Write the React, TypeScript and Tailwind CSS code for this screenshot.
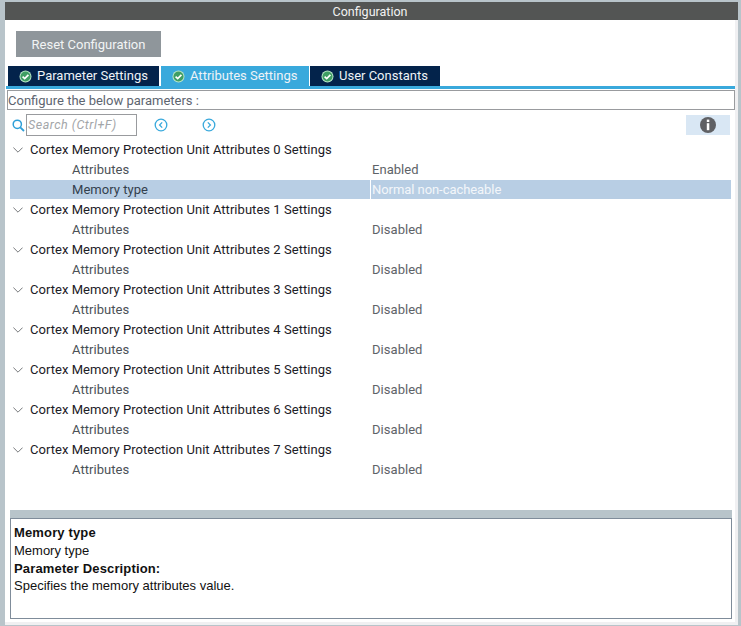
const din = "font-['Roboto',sans-serif]";

const settings = [
  { id: 0, rows: [["Attributes", "Enabled"], ["Memory type", "Normal non-cacheable"]] },
  ...[1, 2, 3, 4, 5, 6, 7].map((id) => ({ id, rows: [["Attributes", "Disabled"]] })),
];

const CheckBadge = () => (
  <svg width="13" height="13" viewBox="0 0 13 13" className="shrink-0">
    <circle cx="6.5" cy="6.5" r="6" fill="#b9e6c8" />
    <circle cx="6.5" cy="6.5" r="5" fill="#3f9e63" />
    <path d="M3.6 6.6 L5.7 8.6 L9.4 4.8" fill="none" stroke="#fff" strokeWidth="1.7" />
  </svg>
);

const Tab = ({ label, active, className }: { label: string; active?: boolean; className: string }) => (
  <div
    className={`flex h-5 shrink-0 items-center whitespace-nowrap text-[13px] text-[#eef3f7] ${
      active ? "bg-[#39a9dc]" : "bg-[#03234b]"
    } ${className}`}
  >
    <CheckBadge />
    <span className="ml-[5px]">{label}</span>
  </div>
);

const CircleArrow = ({ dir }: { dir: "left" | "right" }) => (
  <svg width="14" height="14" viewBox="0 0 14 14">
    <circle cx="7" cy="7" r="5.8" fill="none" stroke="#39a9dc" strokeWidth="1.3" />
    <path
      d={dir === "left" ? "M8.2 4.4 L5.6 7 L8.2 9.6" : "M5.8 4.4 L8.4 7 L5.8 9.6"}
      fill="none"
      stroke="#39a9dc"
      strokeWidth="1.3"
    />
  </svg>
);

export default function App() {
  return (
    <div className={`h-[626px] w-[741px] overflow-hidden bg-[#b8c4ca] pl-[5px] pr-[3px] pt-[2px] pb-px ${din}`}>
      <div className="flex h-full flex-col bg-[#f0f0f2]">
        <div className="flex h-[18px] shrink-0 items-center justify-center bg-[#535554] pr-[3px] pt-[2px] text-[12.5px] text-[#f2f2f2]">
          Configuration
        </div>
        <div className="mr-[3px] mb-[3px] flex min-h-0 flex-1 flex-col bg-white pl-px">
          <div className="ml-[10px] mt-[11px] flex h-[26px] w-[145px] items-center justify-center bg-[#8f969b] pt-px text-[13px] text-[#f2f4f5]">
            Reset Configuration
          </div>

          <div className="ml-[2px] mt-[9px] flex">
            <Tab label="Parameter Settings" className="w-[151px] pl-[11px]" />
            <Tab label="Attributes Settings" active className="ml-[2px] w-[148px] pl-[11px]" />
            <Tab label="User Constants" className="ml-px w-[130px] pl-[11px]" />
          </div>
          <div className="h-[3px] shrink-0 bg-[#39a9dc]" />

          <div className="ml-px mt-px flex h-5 items-center border border-[#999b9e] pt-[2px] text-[13px] text-[#5d6570]">
            Configure the below parameters :
          </div>

          <div className="mt-1 flex h-[22px] items-center">
            <svg width="13" height="13" viewBox="0 0 13 13" className="ml-[6px]">
              <circle cx="5.3" cy="5.3" r="4.1" fill="none" stroke="#2e9fd8" strokeWidth="1.5" />
              <path d="M8.3 8.3 L12 12" stroke="#2e9fd8" strokeWidth="1.8" />
            </svg>
            <div className="ml-px flex h-[22px] w-[111px] items-center border border-[#999b9e] pl-px text-[12.5px] italic tracking-[0.5px] text-[#a3a6a9]">
              Search (Ctrl+F)
            </div>
            <div className="ml-[17px] flex">
              <CircleArrow dir="left" />
            </div>
            <div className="ml-[34px] flex">
              <CircleArrow dir="right" />
            </div>
            <div className="ml-auto mr-[5px] flex h-5 w-11 items-center justify-center bg-[#d9e7f4]">
              <svg width="16" height="16" viewBox="0 0 16 16">
                <circle cx="8" cy="8" r="8" fill="#5f6064" />
                <rect x="6.8" y="2.6" width="2.5" height="2.4" fill="#fff" />
                <rect x="6.8" y="6.2" width="2.5" height="7" fill="#fff" />
              </svg>
            </div>
          </div>

          <div className="mt-1 flex-1 text-[13px] tracking-[0.04px]">
            {settings.map((group) => (
              <div key={group.id}>
                <div className="flex h-5 items-center text-[#1c2026]">
                  <svg width="10" height="6" viewBox="0 0 10 6" className="ml-[7px] shrink-0">
                    <path d="M0.4 0.6 L5 5.2 L9.6 0.6" fill="none" stroke="#77797c" strokeWidth="1" />
                  </svg>
                  <span className="ml-[7px]">Cortex Memory Protection Unit Attributes {group.id} Settings</span>
                </div>
                {group.rows.map(([name, value]) =>
                  value.startsWith("Normal") ? (
                    <div key={name} className="ml-1 mr-1 flex h-5 border-b border-white bg-[#b8cee4]">
                      <div className="flex w-[361px] items-center border-r border-white pl-[62px] text-[#33404d]">{name}</div>
                      <div className="flex items-center pl-px tracking-[-0.06px] text-[#f3f6fa]">{value}</div>
                    </div>
                  ) : (
                    <div key={name} className="ml-1 flex h-5 items-center text-[#4b5157]">
                      <div className="w-[361px] pl-[62px]">{name}</div>
                      <div className="pl-px text-[#5e6368]">{value}</div>
                    </div>
                  ),
                )}
              </div>
            ))}
          </div>

          <div className="ml-1 mr-[3px] mb-[3px] h-[109px] shrink-0 border-t-[8px] border-[#b8c4ca]">
            <div className="h-full border border-[#7f8c9a] px-[3px] pt-[5px] font-['Liberation_Sans',sans-serif] text-[13px] leading-[17.8px] text-[#111]">
              <div className="font-bold tracking-[0.15px]">Memory type</div>
              <div>Memory type</div>
              <div className="font-bold tracking-[0.15px]">Parameter Description:</div>
              <div>Specifies the memory attributes value.</div>
            </div>
          </div>
        </div>
      </div>
    </div>
  );
}
